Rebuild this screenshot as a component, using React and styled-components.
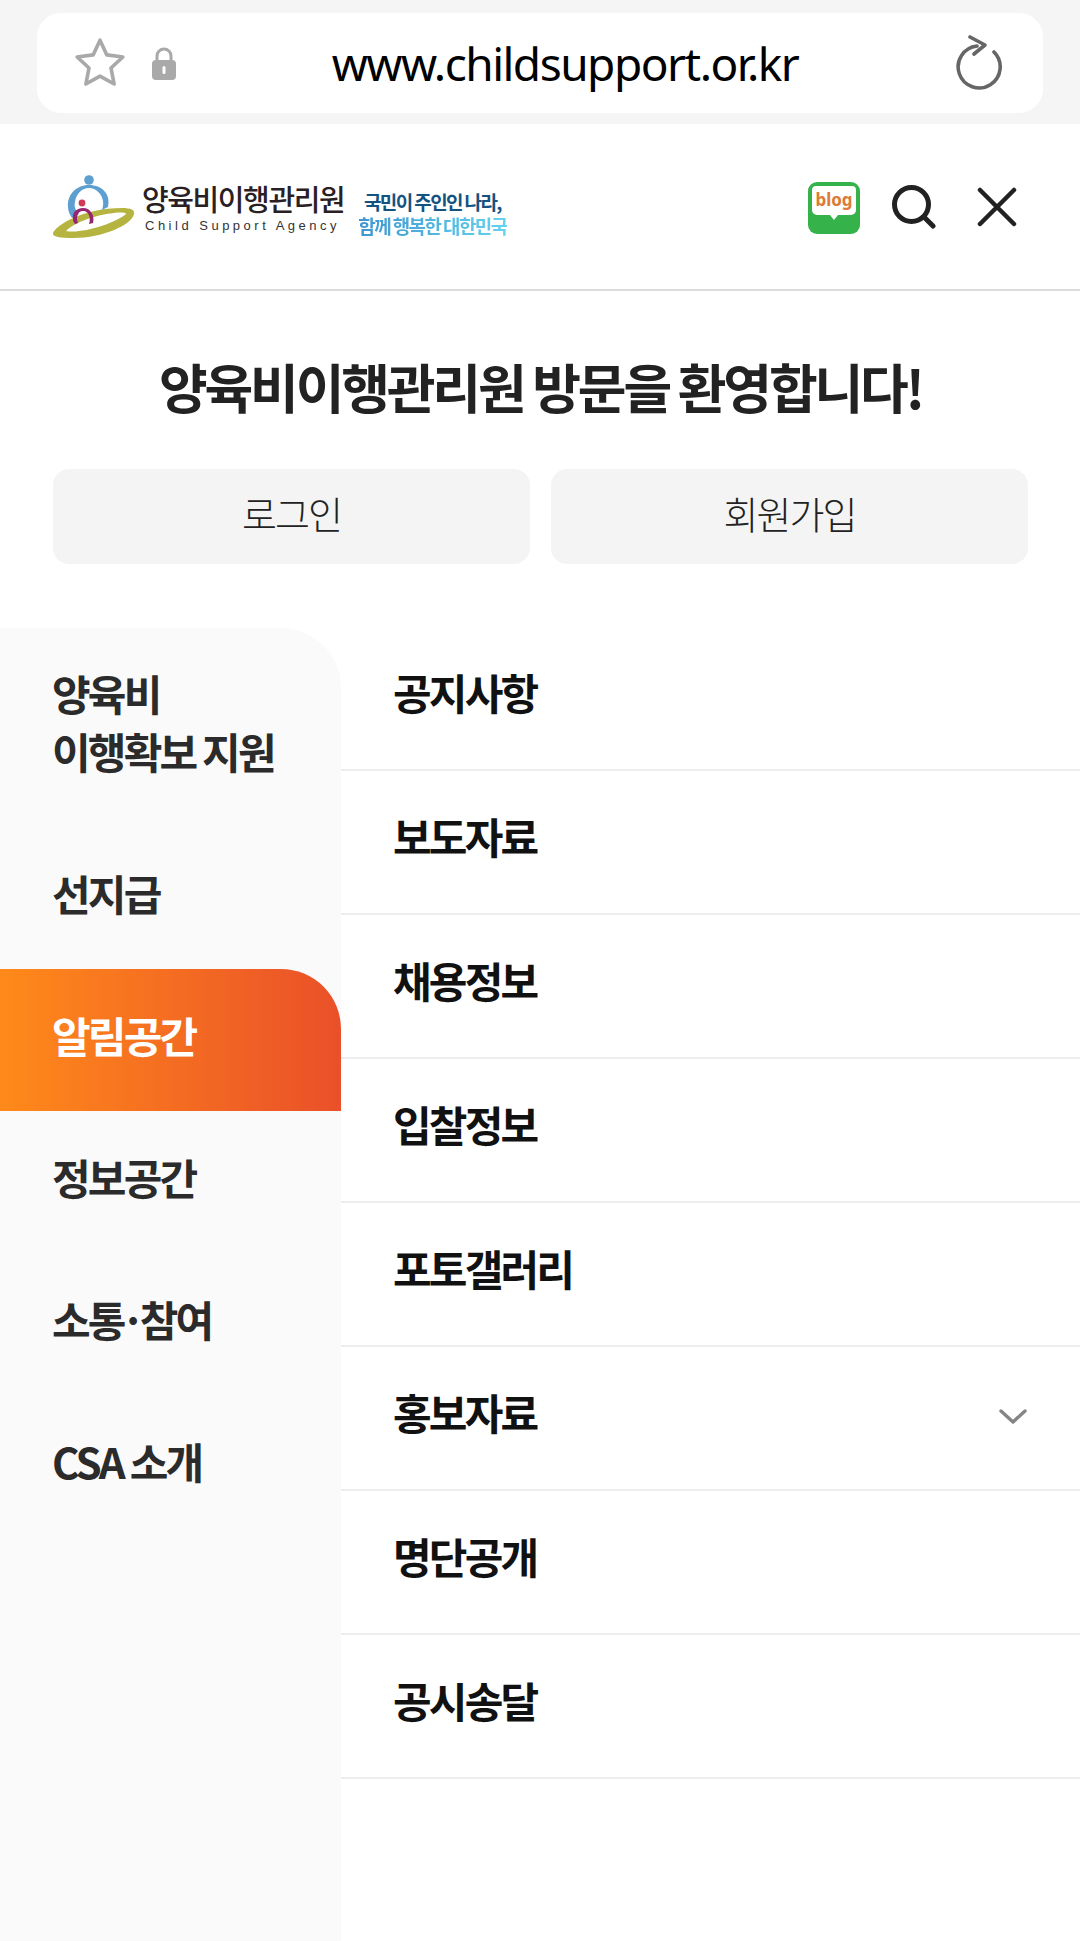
import React from 'react';
import styled, { createGlobalStyle } from 'styled-components';

const FONT = `"Noto Sans CJK KR", "Noto Sans", sans-serif`;

const GlobalStyle = createGlobalStyle`
    html, body {
        margin: 0;
        padding: 0;
        background: #fff;
    }
    * {
        box-sizing: border-box;
    }
`;

const Page = styled.div`
    width: 1080px;
    height: 1941px;
    display: flex;
    flex-direction: column;
    overflow: hidden;
    background: #fff;
    font-family: ${FONT};
`;

const BrowserChrome = styled.div`
    height: 124px;
    padding: 13px 37px 11px;
    background: #f5f5f5;
`;

const AddressBar = styled.div`
    height: 100px;
    display: flex;
    align-items: center;
    padding: 0 39px 0 36px;
    background: #fff;
    border-radius: 24px;
`;

const Url = styled.span`
    flex: 1;
    padding-right: 1px;
    text-align: center;
    font-family: "Noto Sans", sans-serif;
    font-size: 46px;
    letter-spacing: -1.5px;
    color: #000;
`;

const Header = styled.header`
    height: 167px;
    display: flex;
    align-items: center;
    padding: 0 63px 0 52px;
    border-bottom: 2px solid #dcdcdc;
`;

const Logo = styled.div`
    flex: 1;
    display: flex;
    align-items: center;
    padding-top: 2px;
`;

const AgencyName = styled.div`
    display: flex;
    flex-direction: column;
    margin-left: 6px;
`;

const AgencyKo = styled.span`
    height: 30px;
    margin-bottom: 6px;
    font-size: 29px;
    line-height: 30px;
    font-weight: 500;
    letter-spacing: -1.4px;
    color: #2a2024;
`;

const AgencyEn = styled.span`
    padding-left: 3px;
    font-family: "Liberation Sans", sans-serif;
    font-size: 13px;
    line-height: 14px;
    letter-spacing: 3.5px;
    color: #333;
    white-space: nowrap;
`;

const Slogan = styled.div`
    display: flex;
    flex-direction: column;
    align-items: center;
    margin: 13px 0 0 14px;
    font-size: 19px;
    line-height: 24px;
    font-weight: 700;
    letter-spacing: -1.6px;
`;

const SloganDark = styled.span`
    color: #14527f;
`;

const SloganLight = styled.span`
    background: linear-gradient(90deg, #3f95cf, #64d3ee);
    -webkit-background-clip: text;
    background-clip: text;
    color: transparent;
`;

const HeaderIcons = styled.div`
    display: flex;
    align-items: center;
    gap: 33px;
`;

const BlogSlot = styled.span`
    display: flex;
    margin: 2px -2px 0 0;
`;

const CloseSlot = styled.span`
    display: flex;
    margin-left: 8px;
`;

const Welcome = styled.section`
    padding: 57px 52px 64px 53px;
`;

const Title = styled.h1`
    margin: 0 0 44px;
    text-align: center;
    font-size: 53px;
    line-height: 77px;
    font-weight: 700;
    letter-spacing: -3.2px;
    color: #222;
`;

const AuthRow = styled.div`
    display: grid;
    grid-template-columns: 477px 477px;
    gap: 21px;
`;

const AuthButton = styled.button`
    height: 95px;
    padding: 0 0 8px;
    border: 0;
    border-radius: 16px;
    background: #f4f4f4;
    font-family: ${FONT};
    font-size: 38px;
    font-weight: 300;
    letter-spacing: -2px;
    color: #222;
`;

const Menu = styled.div`
    flex: 1;
    display: flex;
    min-height: 0;
`;

const Sidebar = styled.nav`
    width: 341px;
    flex: none;
    background: #fafafa;
    border-top-right-radius: 60px;
`;

const SideItem = styled.div`
    height: ${props => props.$tall ? 199 : 142}px;
    display: flex;
    align-items: center;
    padding: ${props => props.$tall ? '0 0 12px 52px' : '0 0 11px 52px'};
    font-size: 42px;
    line-height: 58px;
    font-weight: 700;
    letter-spacing: -2.8px;
    color: ${props => props.$active ? '#fff' : '#2b2b2b'};
    background: ${props => props.$active ? 'linear-gradient(90deg, #ff8a1a, #ea5029)' : 'transparent'};
    border-top-right-radius: ${props => props.$active ? '60px' : '0'};
`;

const MiddleDot = styled.span`
    margin: 0 -3px;
`;

const SubList = styled.ul`
    flex: 1;
    margin: 0;
    padding: 0;
    list-style: none;
`;

const SubItem = styled.li`
    height: 144px;
    display: flex;
    align-items: center;
    justify-content: space-between;
    padding: 0 53px 14px 52px;
    border-bottom: 2px solid #eeeeee;
    font-size: 42px;
    font-weight: 700;
    letter-spacing: -2.8px;
    color: #111;
    &:first-child {
        height: 143px;
    }
`;

const Star = () => (
    <svg width="54" height="54" viewBox="0 0 52 52" fill="none">
        <path d="M26 4l6.6 14.2 15.4 2-11.4 10.6 3 15.4L26 38.6l-13.6 7.6 3-15.4L4 20.2l15.4-2z"
            stroke="#a9a9a9" strokeWidth="3.5" strokeLinejoin="round" />
    </svg>
);

const Lock = () => (
    <svg width="26" height="34" viewBox="0 0 26 34" style={{ marginLeft: 24, marginTop: 2 }}>
        <path d="M6 15V9a7 7 0 0 1 14 0v6" fill="none" stroke="#a9a9a9" strokeWidth="3" />
        <rect x="1" y="13" width="24" height="20" rx="4" fill="#a9a9a9" />
        <rect x="11.5" y="19" width="3" height="8" rx="1.5" fill="#fff" />
    </svg>
);

const Refresh = () => (
    <svg width="50" height="56" viewBox="0 0 50 56" fill="none">
        <path d="M23 11A21 21 0 1 0 40 17" stroke="#666" strokeWidth="3.6" strokeLinecap="round" />
        <path d="M16 2l15 8-11 9" stroke="#666" strokeWidth="3.6" strokeLinecap="round" strokeLinejoin="round" />
    </svg>
);

const LogoMark = () => (
    <svg width="84" height="66" viewBox="0 0 84 66">
        <path d="M1 58C4 50 32 33 70 33c9 0 13 2 12 6-2 11-32 24-60 24C8 63 0 62 1 58zm13-2c16 3 50-8 60-17 1-1-4-2-12-1-20 2-40 10-48 18z"
            fill="#b6b440" fillRule="evenodd" />
        <circle cx="37" cy="5" r="4.8" fill="#5d9fd0" />
        <path d="M37 10C24 10 15 20 16 32c0 4 2 8 4 11l7-4c-4-4-5-8-4-12 1-8 7-14 14-14s13 6 14 13c.5 3 0 6-1 9l6-3c3-13-6-22-19-22z" fill="#5d9fd0" />
        <circle cx="30" cy="28" r="3.4" fill="#cf3b56" />
        <path d="M31 33c-7 0-11 5-10 11 0 2 1 4 2 5l3-1c-2-5-1-12 5-12s8 7 6 13l4-1c2-7-2-15-10-15z" fill="#97256f" />
    </svg>
);

const BlogIcon = () => (
    <svg width="54" height="54" viewBox="0 0 54 54">
        <rect x="1" y="1" width="52" height="52" rx="9" fill="#36b24a" />
        <path d="M9 5h36a4 4 0 0 1 4 4v20a5 5 0 0 1-5 5H31l-4 5-4-5H10a5 5 0 0 1-5-5V9a4 4 0 0 1 4-4z" fill="#fff" />
        <text x="27" y="25" textAnchor="middle" fontFamily="Noto Sans, sans-serif" fontSize="17" fontWeight="700" fill="#dd7a35">blog</text>
    </svg>
);

const SearchIcon = () => (
    <svg width="44" height="44" viewBox="0 0 44 44" fill="none">
        <circle cx="19.5" cy="19.5" r="17" stroke="#222" strokeWidth="5" />
        <path d="M32 32l9 9" stroke="#222" strokeWidth="5" strokeLinecap="round" />
    </svg>
);

const CloseIcon = () => (
    <svg width="40" height="40" viewBox="0 0 40 40" fill="none">
        <path d="M3 3l34 34M37 3L3 37" stroke="#222" strokeWidth="4.5" strokeLinecap="round" />
    </svg>
);

const Chevron = () => (
    <svg width="28" height="18" viewBox="0 0 28 18" fill="none" style={{ marginTop: 12 }}>
        <path d="M2 3l12 11L26 3" stroke="#858585" strokeWidth="3.4" strokeLinecap="round" strokeLinejoin="round" />
    </svg>
);

const sideMenu = [
    { label: <>양육비<br />이행확보 지원</>, tall: true },
    { label: '선지급' },
    { label: '알림공간', active: true },
    { label: '정보공간' },
    { label: <>소통<MiddleDot>·</MiddleDot>참여</> },
    { label: 'CSA 소개' },
];

const subMenu = ['공지사항', '보도자료', '채용정보', '입찰정보', '포토갤러리', '홍보자료', '명단공개', '공시송달'];

const App = () => {
    return (
        <Page>
            <GlobalStyle />
            <BrowserChrome>
                <AddressBar>
                    <Star />
                    <Lock />
                    <Url>www.childsupport.or.kr</Url>
                    <Refresh />
                </AddressBar>
            </BrowserChrome>
            <Header>
                <Logo>
                    <LogoMark />
                    <AgencyName>
                        <AgencyKo>양육비이행관리원</AgencyKo>
                        <AgencyEn>Child Support Agency</AgencyEn>
                    </AgencyName>
                    <Slogan>
                        <SloganDark>국민이 주인인 나라,</SloganDark>
                        <SloganLight>함께 행복한 대한민국</SloganLight>
                    </Slogan>
                </Logo>
                <HeaderIcons>
                    <BlogSlot><BlogIcon /></BlogSlot>
                    <SearchIcon />
                    <CloseSlot><CloseIcon /></CloseSlot>
                </HeaderIcons>
            </Header>
            <Welcome>
                <Title>양육비이행관리원 방문을 환영합니다!</Title>
                <AuthRow>
                    <AuthButton>로그인</AuthButton>
                    <AuthButton>회원가입</AuthButton>
                </AuthRow>
            </Welcome>
            <Menu>
                <Sidebar>
                    {sideMenu.map((item, i) => (
                        <SideItem key={i} $tall={item.tall} $active={item.active}>
                            <span>{item.label}</span>
                        </SideItem>
                    ))}
                </Sidebar>
                <SubList>
                    {subMenu.map(name => (
                        <SubItem key={name}>
                            {name}
                            {name === '홍보자료' && <Chevron />}
                        </SubItem>
                    ))}
                </SubList>
            </Menu>
        </Page>
    );
};

export default App;
